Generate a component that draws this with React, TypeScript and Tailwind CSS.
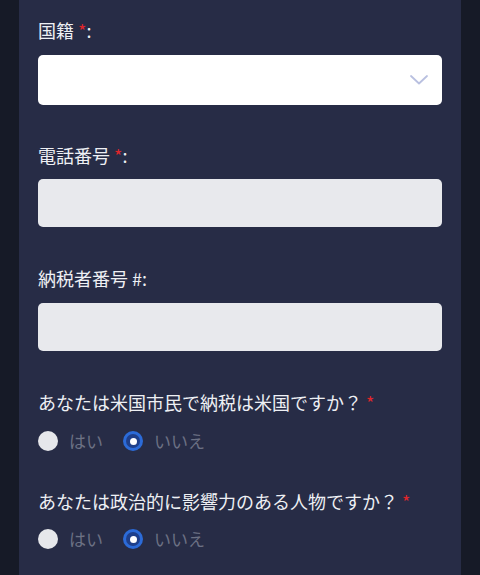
import React, { useState } from 'react'

const font = { fontFamily: '"Noto Sans CJK JP", "Liberation Sans", sans-serif' }

function Required() {
  return <span className="text-[#e0262b] ml-1">*</span>
}

function RadioGroup({ name, value, onChange }: { name: string; value: string; onChange: (v: string) => void }) {
  const options = [
    { value: 'yes', label: 'はい' },
    { value: 'no', label: 'いいえ' },
  ]
  return (
    <div className="flex items-center h-7 gap-5">
      {options.map((opt) => {
        const checked = value === opt.value
        return (
          <label key={opt.value} className="flex items-center gap-[11px] cursor-pointer">
            <input
              type="radio"
              name={name}
              className="sr-only"
              checked={checked}
              onChange={() => onChange(opt.value)}
            />
            {checked ? (
              <span className="w-5 h-5 rounded-full bg-[#2c6bd8] flex items-center justify-center">
                <span className="w-[14px] h-[14px] rounded-full bg-[#1f3f8a] flex items-center justify-center">
                  <span className="w-[7px] h-[7px] rounded-full bg-white" />
                </span>
              </span>
            ) : (
              <span className="w-5 h-5 rounded-full bg-[#e6e7eb]" />
            )}
            <span className="text-[17px] text-[#6c7184] leading-6">{opt.label}</span>
          </label>
        )
      })}
    </div>
  )
}

export default function App() {
  const [usCitizen, setUsCitizen] = useState('no')
  const [political, setPolitical] = useState('no')

  return (
    <div className="min-h-[575px] bg-[#161a27] px-[19px]" style={font}>
      <div className="bg-[#272c46] min-h-[575px] px-[19px] pt-[18px] pb-6 flex flex-col">
        {/* Nationality */}
        <label className="text-[18px] leading-6 text-[#eef0f4]">
          国籍<Required />:
        </label>
        <div className="mt-[13px] relative">
          <select className="w-full h-[50px] rounded-[5px] bg-white appearance-none px-3 text-gray-900 outline-none">
            <option value=""></option>
          </select>
          <svg
            className="absolute right-[14px] top-1/2 -translate-y-1/2 pointer-events-none"
            width="18"
            height="10"
            viewBox="0 0 18 10"
            fill="none"
          >
            <path d="M1 1l8 7.5L17 1" stroke="#b9c0e0" strokeWidth="1.8" strokeLinecap="round" strokeLinejoin="round" />
          </svg>
        </div>

        {/* Phone */}
        <label className="mt-[38px] text-[18px] leading-6 text-[#eef0f4]">
          電話番号<Required />:
        </label>
        <input
          type="text"
          className="mt-3 w-full h-12 rounded-[5px] bg-[#e8e9ed] px-3 text-gray-900 outline-none"
        />

        {/* Tax number */}
        <label className="mt-[39px] text-[18px] leading-6 text-[#eef0f4]">
          納税者番号 #:
        </label>
        <input
          type="text"
          className="mt-[13px] w-full h-12 rounded-[5px] bg-[#e8e9ed] px-3 text-gray-900 outline-none"
        />

        {/* US citizen */}
        <p className="mt-[39px] text-[18px] leading-6 text-[#eef0f4]">
          あなたは米国市民で納税は米国ですか？<Required />
        </p>
        <div className="mt-[13px]">
          <RadioGroup name="us" value={usCitizen} onChange={setUsCitizen} />
        </div>

        {/* Politically exposed */}
        <p className="mt-[34px] text-[18px] leading-6 text-[#eef0f4]">
          あなたは政治的に影響力のある人物ですか？<Required />
        </p>
        <div className="mt-[12px]">
          <RadioGroup name="pep" value={political} onChange={setPolitical} />
        </div>
      </div>
    </div>
  )
}
